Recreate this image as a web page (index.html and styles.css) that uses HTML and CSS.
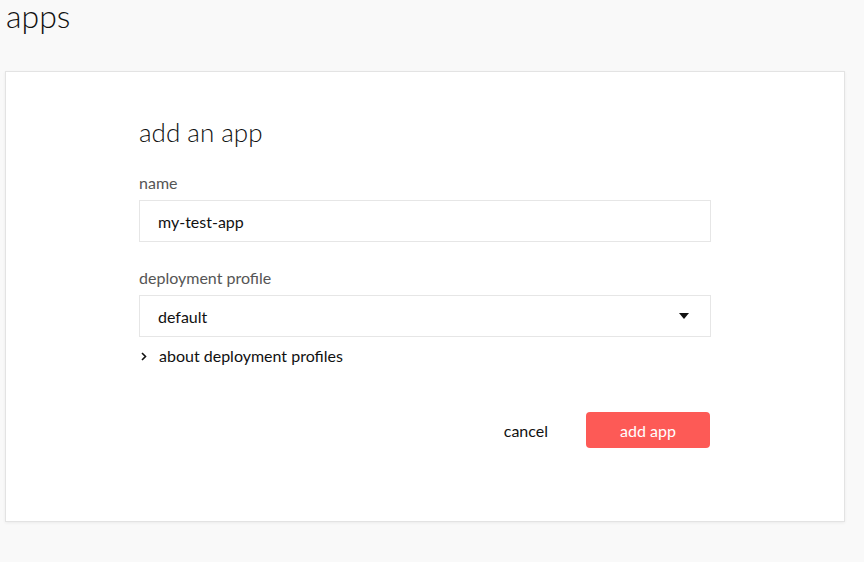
FILE: index.html
```html
<!DOCTYPE html>
<html>
<head>
<meta charset="utf-8">
<link rel="stylesheet" href="styles.css">
</head>
<body>
<h1 class="page-title">apps</h1>
<div class="card">
  <form class="form">
    <h2 class="form-title">add an app</h2>
    <label class="field">
      <span class="label">name</span>
      <span class="input">my-test-app</span>
    </label>
    <label class="field">
      <span class="label">deployment profile</span>
      <span class="input select">default
        <svg class="caret" width="10" height="6" viewBox="0 0 10 6"><path d="M0 0 H10 L5 6 Z" fill="#111"/></svg>
      </span>
    </label>
    <div class="about">
      <svg class="chev" width="6" height="9" viewBox="0 0 6 9"><path d="M1 1 L4.5 4.5 L1 8" fill="none" stroke="#111" stroke-width="1.6"/></svg>
      about deployment profiles
    </div>
    <div class="actions">
      <span class="cancel">cancel</span>
      <span class="submit">add app</span>
    </div>
  </form>
</div>
</body>
</html>
```
FILE: styles.css
```css
html, body {
  margin: 0;
  padding: 0;
}
body {
  background: #f9f9f9;
  font-family: Lato, "Open Sans", sans-serif;
  color: #111;
  width: 864px;
  height: 562px;
  overflow: hidden;
}
.page-title {
  margin: 0;
  padding: 0 0 0 6px;
  height: 71px;
  box-sizing: border-box;
  font-size: 32px;
  font-weight: 300;
  line-height: 32px;
}
.card {
  margin-left: 5px;
  width: 840px;
  height: 451px;
  box-sizing: border-box;
  background: #fff;
  border: 1px solid #e3e3e3;
  box-shadow: 0 1px 3px rgba(0,0,0,0.06);
  padding: 44px 0 0 133px;
}
.form {
  width: 572px;
  display: flex;
  flex-direction: column;
}
.form-title {
  margin: 0 0 25px;
  font-size: 26px;
  font-weight: 300;
  line-height: 32px;
}
.field {
  display: flex;
  flex-direction: column;
  margin-bottom: 26px;
}
.label {
  font-size: 16px;
  color: #555;
  line-height: 20px;
  margin-bottom: 7px;
}
.input {
  height: 42px;
  box-sizing: border-box;
  border: 1px solid #e6e6e6;
  padding: 1px 18px 0;
  font-size: 16px;
  display: flex;
  align-items: center;
  justify-content: space-between;
}
.select .caret {
  margin-right: 3px;
  margin-top: -1px;
}
.about {
  margin-top: -17px;
  font-size: 16px;
  display: flex;
  align-items: center;
  gap: 12px;
  padding-left: 2px;
  line-height: 20px;
}
.actions {
  margin-top: 46px;
  display: flex;
  justify-content: flex-end;
  align-items: center;
  gap: 38px;
}
.cancel {
  font-size: 16px;
}
.submit {
  width: 124px;
  height: 36px;
  box-sizing: border-box;
  background: #fd5a56;
  color: #fff;
  border-radius: 4px;
  display: flex;
  align-items: center;
  justify-content: center;
  font-size: 16px;
  margin-right: 1px;
}
```
